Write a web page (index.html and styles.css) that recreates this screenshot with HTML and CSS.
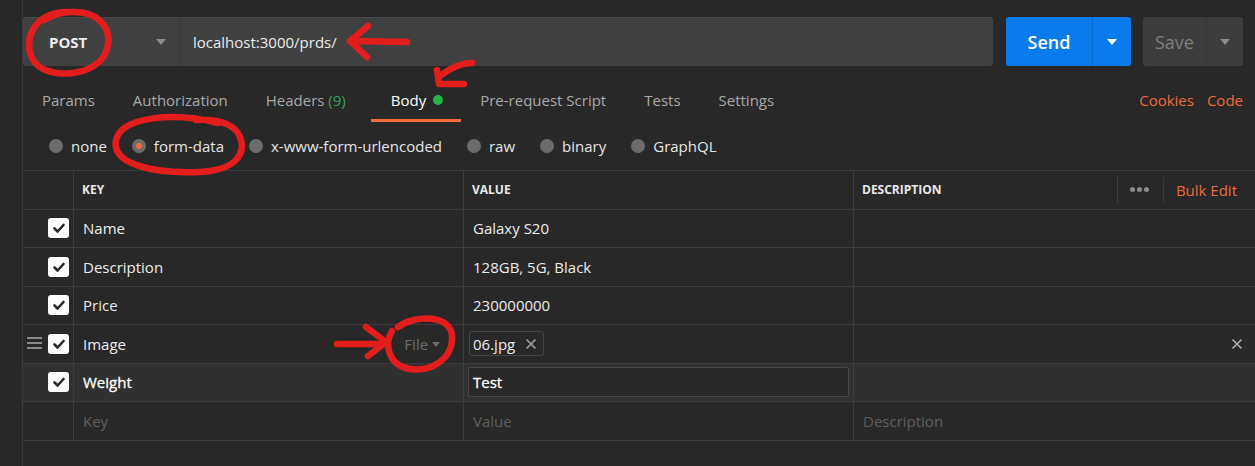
FILE: index.html
```html
<!DOCTYPE html>
<html>
<head>
<meta charset="utf-8">
<link rel="stylesheet" href="styles.css">
</head>
<body>
<div class="app">
  <div class="request-bar">
    <div class="method">
      <span class="method-name">POST</span>
      <span class="caret caret-gray"></span>
    </div>
    <div class="url">localhost:3000/prds/</div>
    <div class="btn send">
      <span class="btn-label">Send</span>
      <span class="btn-drop"><span class="caret caret-white"></span></span>
    </div>
    <div class="btn save">
      <span class="btn-label">Save</span>
      <span class="btn-drop"><span class="caret caret-gray"></span></span>
    </div>
  </div>

  <div class="tabs-row">
    <div class="tabs">
      <div class="tab">Params</div>
      <div class="tab">Authorization</div>
      <div class="tab">Headers <span class="count">(9)</span></div>
      <div class="tab active">Body<span class="dot"></span></div>
      <div class="tab">Pre-request Script</div>
      <div class="tab">Tests</div>
      <div class="tab">Settings</div>
    </div>
    <div class="links">
      <span class="link">Cookies</span>
      <span class="link">Code</span>
    </div>
  </div>

  <div class="radios">
    <label class="radio"><span class="radio-dot"></span>none</label>
    <label class="radio"><span class="radio-dot on"></span>form-data</label>
    <label class="radio"><span class="radio-dot"></span>x-www-form-urlencoded</label>
    <label class="radio"><span class="radio-dot"></span>raw</label>
    <label class="radio"><span class="radio-dot"></span>binary</label>
    <label class="radio"><span class="radio-dot"></span>GraphQL</label>
  </div>

  <div class="kv">
    <div class="kv-row head">
      <div class="cell"></div>
      <div class="cell th">KEY</div>
      <div class="cell th">VALUE</div>
      <div class="cell th desc-head">
        <span>DESCRIPTION</span>
        <div class="head-actions">
          <span class="more"><i></i><i></i><i></i></span>
          <span class="bulk">Bulk Edit</span>
        </div>
      </div>
    </div>

    <div class="kv-row">
      <div class="cell chk"><span class="checkbox"><svg viewBox="0 0 20 20"><path d="M5.5 10.5 L8.6 13.5 L14.5 7" /></svg></span></div>
      <div class="cell">Name</div>
      <div class="cell">Galaxy S20</div>
      <div class="cell"></div>
    </div>
    <div class="kv-row">
      <div class="cell chk"><span class="checkbox"><svg viewBox="0 0 20 20"><path d="M5.5 10.5 L8.6 13.5 L14.5 7" /></svg></span></div>
      <div class="cell">Description</div>
      <div class="cell">128GB, 5G, Black</div>
      <div class="cell"></div>
    </div>
    <div class="kv-row">
      <div class="cell chk"><span class="checkbox"><svg viewBox="0 0 20 20"><path d="M5.5 10.5 L8.6 13.5 L14.5 7" /></svg></span></div>
      <div class="cell">Price</div>
      <div class="cell">230000000</div>
      <div class="cell"></div>
    </div>
    <div class="kv-row">
      <div class="cell chk">
        <span class="handle"><i></i><i></i><i></i></span>
        <span class="checkbox"><svg viewBox="0 0 20 20"><path d="M5.5 10.5 L8.6 13.5 L14.5 7" /></svg></span>
      </div>
      <div class="cell key-file">
        <span>Image</span>
        <span class="file-type">File <span class="caret caret-dim"></span></span>
      </div>
      <div class="cell">
        <span class="chip">06.jpg <svg class="chip-x" viewBox="0 0 12 12"><path d="M1.5 1.5 L10.5 10.5 M10.5 1.5 L1.5 10.5" /></svg></span>
      </div>
      <div class="cell row-end">
        <svg class="row-x" viewBox="0 0 12 12"><path d="M1.5 1.5 L10.5 10.5 M10.5 1.5 L1.5 10.5" /></svg>
      </div>
    </div>
    <div class="kv-row hover">
      <div class="cell chk"><span class="checkbox"><svg viewBox="0 0 20 20"><path d="M5.5 10.5 L8.6 13.5 L14.5 7" /></svg></span></div>
      <div class="cell strong">Weight</div>
      <div class="cell input-cell"><div class="value-input strong">Test</div></div>
      <div class="cell"></div>
    </div>
    <div class="kv-row">
      <div class="cell chk"></div>
      <div class="cell placeholder">Key</div>
      <div class="cell placeholder">Value</div>
      <div class="cell placeholder">Description</div>
    </div>
  </div>
</div>

<svg class="marks" viewBox="0 0 1255 466" width="1255" height="466">
  <path d="M70 12 C 32 10, 20 45, 36 64 C 52 80, 96 76, 106 52 C 114 30, 100 11, 72 12 C 62 12, 52 15, 44 20" />
  <path d="M407 42 L 352 41 M 368 26 L 350 41 L 367 57" />
  <path d="M472 63 C 461 63, 450 68, 440 76 M 437 70 L 439 84 L 464 84" />
  <path d="M218 123 C 175 112, 122 116, 116 140 C 111 163, 150 174, 200 172 C 238 170, 246 152, 240 137 C 234 123, 216 119, 196 120" />
  <path d="M337 344 L 385 344 M 366 327 L 386 342 L 368 356" />
  <path d="M398 327 C 416 314, 451 315, 452 336 C 453 360, 430 372, 410 369 C 390 366, 383 346, 392 331" />
</svg>
</body>
</html>
```

FILE: styles.css
```css
* { box-sizing: border-box; }

html, body {
  margin: 0;
  padding: 0;
  background: #282828;
  width: 1255px;
  height: 466px;
  overflow: hidden;
}

body {
  font-family: "Open Sans", "Noto Sans", sans-serif;
  font-size: 15px;
  color: #f0f0f0;
  position: relative;
}

.app {
  margin-left: 22px;
  border-left: 1px solid #3a3a3a;
  height: 466px;
}

/* request bar */
.request-bar {
  display: flex;
  padding: 17px 12px 0 0;
  height: 66px;
}

.method {
  width: 157px;
  height: 49px;
  background: #404040;
  border-radius: 3px 0 0 3px;
  border-top: 1px solid #4a4a4a;
  display: flex;
  align-items: center;
  padding-left: 26px;
  padding-right: 14px;
  justify-content: space-between;
}

.method-name {
  font-weight: 700;
  color: #ececec;
  font-size: 15px;
}

.caret {
  display: inline-block;
  width: 0;
  height: 0;
  border-left: 5px solid transparent;
  border-right: 5px solid transparent;
  border-top: 6px solid #808080;
}
.caret-white { border-top-color: #ffffff; }
.caret-gray { border-top-color: #8a8a8a; }
.caret-dim { border-top-color: #6d6d6d; border-left-width: 4px; border-right-width: 4px; border-top-width: 5px; vertical-align: 3px; }

.url {
  flex: 1;
  height: 49px;
  background: #404040;
  border-top: 1px solid #4a4a4a;
  border-left: 1px solid #383838;
  border-radius: 0 3px 3px 0;
  display: flex;
  align-items: center;
  padding-left: 12px;
  color: #ececec;
}

.btn {
  height: 49px;
  display: flex;
  border-radius: 3px;
  overflow: hidden;
}
.btn-label {
  display: flex;
  align-items: center;
  justify-content: center;
  font-size: 18px;
  font-weight: 600;
}
.btn-drop {
  display: flex;
  align-items: center;
  justify-content: center;
}

.send {
  margin-left: 13px;
  width: 125px;
  background: #097bed;
}
.send .btn-label { width: 86px; color: #ffffff; }
.send .btn-drop { width: 39px; border-left: 1px solid #0a6acc; }

.save {
  margin-left: 12px;
  width: 100px;
  background: #3d3d3d;
}
.save .btn-label { width: 63px; color: #7f7f7f; font-weight: 400; }
.save .btn-drop { width: 37px; border-left: 1px solid #353535; }

/* tabs */
.tabs-row {
  display: flex;
  justify-content: space-between;
  margin-top: 14px;
  height: 42px;
}
.tabs { display: flex; }
.tab {
  height: 42px;
  padding: 0 19px;
  display: flex;
  align-items: center;
  color: #a9a9a9;
  border-bottom: 3px solid transparent;
  white-space: pre;
}
.tab.active {
  color: #ffffff;
  border-bottom-color: #f26b3a;
  margin-left: 6px;
  padding: 0 18px 0 20px;
}
.count { color: #38a357; }
.dot {
  display: inline-block;
  width: 10px;
  height: 10px;
  border-radius: 50%;
  background: #26b14b;
  margin-left: 7px;
}
.links {
  display: flex;
  gap: 13px;
  padding-right: 12px;
  height: 39px;
  align-items: center;
}
.link { color: #ec6a3d; }

/* radios */
.radios {
  display: flex;
  align-items: center;
  height: 48px;
  padding-left: 26px;
  gap: 25px;
}
.radio {
  display: flex;
  align-items: center;
  gap: 8px;
  color: #e6e6e6;
}
.radio-dot {
  width: 14px;
  height: 14px;
  border-radius: 50%;
  background: #6b6b6b;
  position: relative;
}
.radio-dot.on::after {
  content: "";
  position: absolute;
  left: 4px;
  top: 4px;
  width: 6px;
  height: 6px;
  border-radius: 50%;
  background: #f26b3a;
}

/* key-value table */
.kv {
  border-top: 1px solid #3c3c3c;
}
.kv-row {
  display: grid;
  grid-template-columns: 51px 390px 390px 1fr;
  height: 38.5px;
  border-bottom: 1px solid #3c3c3c;
}
.kv-row.hover { background: #303030; }
.cell {
  border-right: 1px solid #3c3c3c;
  display: flex;
  align-items: center;
  padding: 0 9px;
  color: #ececec;
  min-width: 0;
}
.cell:last-child { border-right: none; }
.strong { color: #ffffff; -webkit-text-stroke: 0.3px #ffffff; }

.th {
  font-size: 12px;
  font-weight: 700;
  padding-left: 8px;
  color: #e8e8e8;
}
.desc-head {
  justify-content: space-between;
  padding-right: 18px;
}
.head-actions {
  display: flex;
  align-items: center;
  height: 27px;
}
.more {
  display: flex;
  gap: 2px;
  align-items: center;
  height: 27px;
  border-left: 1px solid #3c3c3c;
  padding: 0 14px 0 12px;
}
.more i {
  display: block;
  width: 5px;
  height: 5px;
  border-radius: 50%;
  background: #8a8a8a;
}
.bulk {
  font-size: 15px;
  font-weight: 400;
  color: #ec6a3d;
  border-left: 1px solid #3c3c3c;
  border-radius: 4px 0 0 4px;
  height: 27px;
  display: flex;
  align-items: center;
  padding-left: 12px;
}

.chk {
  justify-content: flex-end;
  padding: 0 4px 0 0;
  position: relative;
}
.checkbox {
  width: 21px;
  height: 20px;
  background: #ffffff;
  border-radius: 3px;
  display: flex;
  align-items: center;
  justify-content: center;
}
.checkbox svg {
  width: 20px;
  height: 20px;
  fill: none;
  stroke: #282828;
  stroke-width: 2.6;
  stroke-linecap: round;
  stroke-linejoin: round;
}
.handle {
  position: absolute;
  left: 4px;
  top: 12px;
  width: 15px;
  display: flex;
  flex-direction: column;
  gap: 3px;
}
.handle i {
  display: block;
  height: 2px;
  background: #8a8a8a;
}

.key-file {
  justify-content: space-between;
  padding-right: 23px;
}
.file-type {
  color: #6d6d6d;
}

.chip {
  display: inline-flex;
  align-items: center;
  height: 25px;
  border: 1px solid #454545;
  border-radius: 3px;
  padding: 0 6px 0 3px;
  gap: 10px;
  margin-left: -4px;
}
.chip-x, .row-x {
  width: 12px;
  height: 12px;
  fill: none;
  stroke: #a0a0a0;
  stroke-width: 1.6;
}
.row-end {
  justify-content: flex-end;
  padding-right: 12px;
}
.row-x { stroke: #b0b0b0; }

.input-cell { padding: 0 4px 0 4px; }
.value-input {
  width: 100%;
  height: 30px;
  border: 1px solid #474747;
  border-radius: 2px;
  display: flex;
  align-items: center;
  padding-left: 4px;
  background: #282828;
}

.placeholder { color: #5e5e5e; }

/* hand-drawn annotations overlay */
.marks {
  position: absolute;
  left: 0;
  top: 0;
  pointer-events: none;
}
.marks path {
  fill: none;
  stroke: #e31c1c;
  stroke-width: 6.5;
  stroke-linecap: round;
  stroke-linejoin: round;
}
```
